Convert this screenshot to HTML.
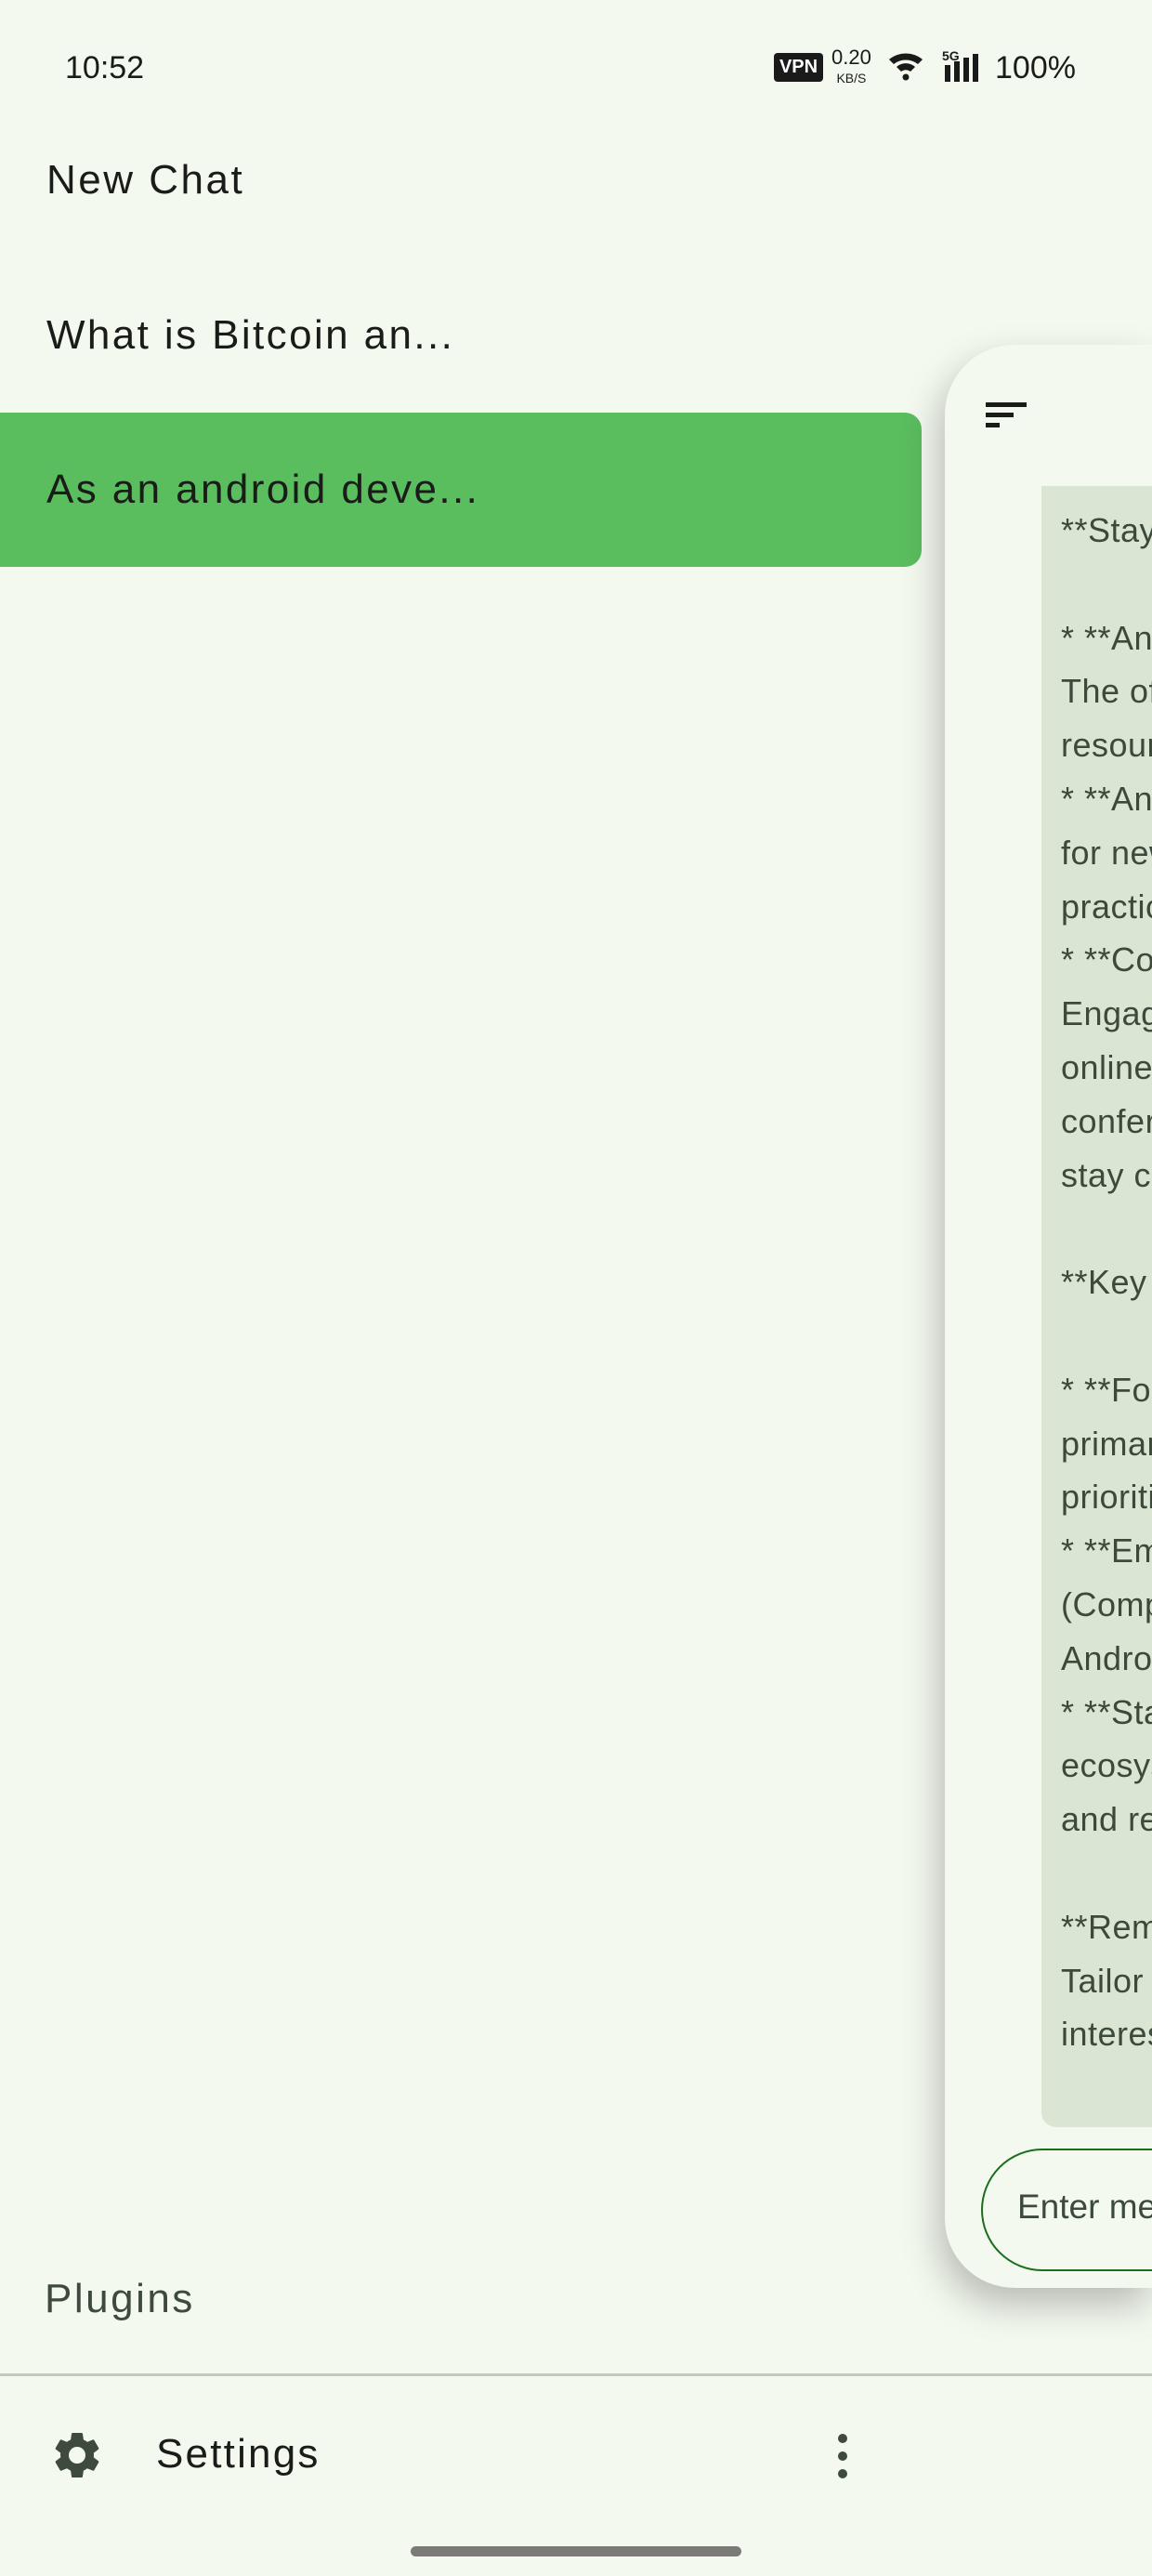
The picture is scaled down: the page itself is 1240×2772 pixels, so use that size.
<!DOCTYPE html>
<html><head><meta charset="utf-8"><style>
html,body{margin:0;padding:0}
body{width:1240px;height:2772px;background:#f4f9ef;position:relative;overflow:hidden;font-family:"Liberation Sans",sans-serif;color:#1a1c19}
.a{position:absolute;white-space:nowrap}
.clip{position:absolute;left:0;top:0;width:1240px;height:2772px;overflow:hidden}
</style></head><body><div class="clip">
<div class="a" style="left:70px;top:54px;font-size:34px;color:#1a1c19">10:52</div>
<div class="a" style="left:833px;top:57px;width:53px;height:31px;background:#1a1a1a;border-radius:4px;color:#fff;font-size:20px;font-weight:bold;text-align:center;line-height:31px">VPN</div>
<div class="a" style="left:895px;top:52px;font-size:22px;line-height:20px;text-align:center">0.20<br><span style="font-size:14px">KB/S</span></div>
<svg class="a" style="left:955px;top:52px" width="42" height="36" viewBox="0 0 42 36"><path d="M2 12 A28 28 0 0 1 38 12 L33 17 A21 21 0 0 0 7 17Z M10 20 A15 15 0 0 1 30 20 L25 25 A8 8 0 0 0 15 25Z" fill="#1a1a1a"/><circle cx="20" cy="31" r="3.5" fill="#1a1a1a"/></svg>
<div class="a" style="left:1014px;top:52px;font-size:14px;font-weight:bold">5G</div>
<svg class="a" style="left:1015px;top:58px" width="46" height="30"><rect x="2" y="12" width="6" height="18" fill="#1a1a1a"/><rect x="12" y="8" width="6" height="22" fill="#1a1a1a"/><rect x="22" y="4" width="6" height="26" fill="#1a1a1a"/><rect x="32" y="0" width="6" height="30" fill="#1a1a1a"/></svg>
<div class="a" style="left:1071px;top:54px;font-size:34px">100%</div>

<div class="a" style="left:50px;top:169px;font-size:44px;letter-spacing:2.5px">New Chat</div>
<div class="a" style="left:50px;top:336px;font-size:44px;letter-spacing:2.4px">What is Bitcoin an...</div>
<div class="a" style="left:0;top:444px;width:992px;height:166px;background:#5abd5e;border-radius:0 18px 18px 0"></div>
<div class="a" style="left:50px;top:502px;font-size:44px;letter-spacing:2.4px">As an android deve...</div>

<div class="a" style="left:1017px;top:371px;width:223px;height:2091px;background:#f4f9ef;border-radius:75px 0 0 75px;box-shadow:-6px 18px 40px rgba(0,0,0,0.25)"></div>
<svg class="a" style="left:1061px;top:433px" width="44" height="28"><rect x="0" y="0" width="44" height="5" fill="#1a1c19"/><rect x="0" y="11" width="30" height="5" fill="#1a1c19"/><rect x="0" y="22" width="15" height="5" fill="#1a1c19"/></svg>
<div class="a" style="left:1121px;top:523px;width:119px;height:1766px;background:#dae5d4;border-radius:0 0 0 16px"></div>
<div class="a" style="left:1142px;top:542px;width:98px;overflow:hidden;font-size:36px;line-height:57.8px;color:#3c4a3c;letter-spacing:0.5px;white-space:pre">**Stay updated
 
* **Android
The official
resources
* **Android
for news
practices
* **Community
Engage
online
conferences
stay current
 
**Key
 
* **Focus
primary
prioritize
* **Embrace
(Compose
Android
* **Stay
ecosystem
and related
 
**Remember
Tailor
interests</div>
<div class="a" style="left:1056px;top:2312px;width:190px;height:128px;border:2px solid #1b6e1b;border-radius:66px 0 0 66px"></div>
<div class="a" style="left:1095px;top:2354px;width:145px;overflow:hidden;font-size:37px;color:#3c4a3c">Enter message</div>

<div class="a" style="left:48px;top:2449px;font-size:44px;color:#3f4a3f;letter-spacing:2.5px">Plugins</div>
<div class="a" style="left:0;top:2554px;width:1240px;height:3px;background:#bfcabb"></div>
<svg class="a" style="left:53px;top:2612px" width="60" height="60" viewBox="0 0 24 24"><path fill="#3f4a3f" d="M19.14 12.94c.04-.3.06-.61.06-.94 0-.32-.02-.64-.07-.94l2.03-1.58a.49.49 0 0 0 .12-.61l-1.92-3.32a.49.49 0 0 0-.59-.22l-2.39.96c-.5-.38-1.030-.7-1.62-.94l-.36-2.54a.48.48 0 0 0-.48-.41h-3.84c-.24 0-.43.17-.47.41l-.36 2.54c-.59.24-1.13.57-1.62.94l-2.39-.96a.48.48 0 0 0-.59.22L2.74 8.87c-.12.21-.08.47.12.61l2.03 1.58c-.05.3-.09.63-.09.94s.2.64.07.94l-2.03 1.58a.49.49 0 0 0-.12.61l1.92 3.32c.12.22.37.29.59.22l2.39-.96c.5.38 1.03.7 1.62.94l.36 2.54c.05.24.24.41.48.41h3.840c.24 0 .44-.17.47-.41l.36-2.54c.59-.24 1.13-.56 1.62-.94l2.39.96c.22.08.47 0 .59-.22l1.92-3.32c.12-.22.07-.47-.12-.61l-2.01-1.58zM12 15.6A3.6 3.6 0 1 1 12 8.4a3.6 3.6 0 0 1 0 7.2z"/></svg>
<div class="a" style="left:168px;top:2616px;font-size:44px;color:#1a1c19;letter-spacing:2.2px">Settings</div>
<svg class="a" style="left:898px;top:2618px" width="18" height="50"><circle cx="9" cy="6" r="5" fill="#3f4a3f"/><circle cx="9" cy="25" r="5" fill="#3f4a3f"/><circle cx="9" cy="44" r="5" fill="#3f4a3f"/></svg>
<div class="a" style="left:442px;top:2740px;width:356px;height:11px;background:#7a7b77;border-radius:6px"></div>
</div></body></html>
